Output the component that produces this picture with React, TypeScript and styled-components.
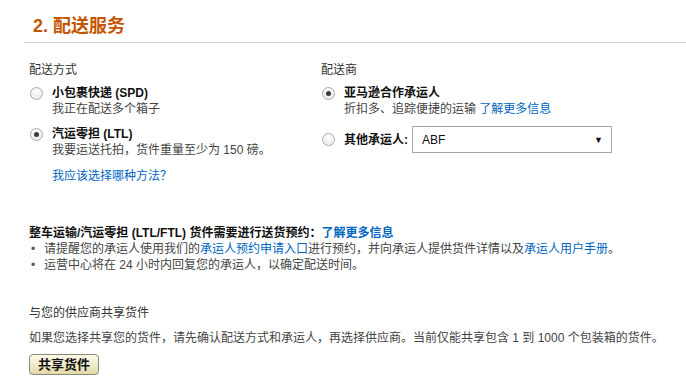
import React from "react";
import styled, { createGlobalStyle } from "styled-components";

const Global = createGlobalStyle`
  html, body { margin: 0; padding: 0; background: #fff; }
  body {
    font-family: "Liberation Sans", Arial, "Noto Sans CJK SC", sans-serif;
    font-size: 12px;
    line-height: 16px;
    color: #333;
  }
`;

const Page = styled.div`
  padding-left: 24px;
  width: 662px;
`;

const Header = styled.div`
  padding: 15px 0 5px 9px;
  border-bottom: 1px solid #cfcfcf;
`;

const Title = styled.h2`
  margin: 0;
  font-size: 18px;
  line-height: 22px;
  font-weight: 700;
  color: #c45500;
`;

const Content = styled.div`
  padding-left: 5px;
`;

const Columns = styled.div`
  display: grid;
  grid-template-columns: 292px 1fr;
  margin-top: 19px;
`;

const Column = styled.div`
  display: flex;
  flex-direction: column;
`;

const ColHeading = styled.div`
  color: #333;
  margin-bottom: 7px;
`;

const Option = styled.label<{ $gap?: number }>`
  display: flex;
  align-items: flex-start;
  margin-top: ${(p) => p.$gap ?? 0}px;
`;

const InlineOption = styled.label`
  display: flex;
  align-items: center;
  margin-top: 9px;
  height: 27px;
`;

const Radio = styled.span<{ $checked?: boolean; $inline?: boolean }>`
  flex: none;
  width: 11px;
  height: 11px;
  border-radius: 50%;
  border: 1px solid #a9a9a9;
  background: radial-gradient(circle at 50% 35%, #ffffff 0%, #eeeeee 55%, #d6d6d6 100%);
  margin: ${(p) => (p.$inline ? "0" : "2px")} 9px 0 1px;
  display: flex;
  align-items: center;
  justify-content: center;
  box-shadow: inset 0 0 0 1px rgba(255, 255, 255, 0.6);
  &::after {
    content: "";
    display: ${(p) => (p.$checked ? "block" : "none")};
    width: 5px;
    height: 5px;
    border-radius: 50%;
    background: #3c3c3c;
  }
`;

const OptionText = styled.div`
  display: flex;
  flex-direction: column;
`;

const OptionTitle = styled.span`
  font-weight: 700;
  color: #111;
`;

const OptionSub = styled.span`
  color: #444;
`;

const Link = styled.a<{ $bold?: boolean }>`
  color: #0066c0;
  text-decoration: none;
  font-weight: ${(p) => (p.$bold ? 700 : 400)};
`;

const HelpLink = styled(Link)`
  margin: 10px 0 0 23px;
`;

const Select = styled.div`
  box-sizing: border-box;
  margin-left: 4px;
  width: 200px;
  height: 27px;
  border: 1px solid #a6a6a6;
  display: flex;
  align-items: center;
  justify-content: space-between;
  padding: 0 8px 0 9px;
  color: #111;
  font-size: 12px;
`;

const Arrow = styled.span`
  font-size: 9px;
  color: #111;
`;

const Notice = styled.div`
  margin-top: 41px;
`;

const NoticeTitle = styled.div`
  font-weight: 700;
  color: #111;
`;

const List = styled.ul`
  list-style: none;
  margin: 0;
  padding: 0;
`;

const Item = styled.li`
  display: flex;
  color: #444;
  &::before {
    content: "•";
    color: #555;
    width: 15px;
    padding-left: 2px;
    box-sizing: border-box;
  }
`;

const Share = styled.div`
  margin-top: 32px;
  display: flex;
  flex-direction: column;
  align-items: flex-start;
`;

const ShareTitle = styled.div`
  color: #333;
`;

const Paragraph = styled.p`
  margin: 9px 0 0;
  color: #444;
`;

const Button = styled.button`
  margin-top: 8px;
  height: 21px;
  padding: 0 8px;
  border: 1px solid #8a8a7a;
  border-radius: 4px;
  background: linear-gradient(to bottom, #fbf8e8 0%, #f1ebcb 50%, #e2d9a8 100%);
  font-family: inherit;
  font-size: 13px;
  font-weight: 700;
  color: #111;
  line-height: 19px;
  box-shadow: 0 1px 1px rgba(0, 0, 0, 0.15);
`;

export default function App() {
  return (
    <Page>
      <Global />
      <Header>
        <Title>2. 配送服务</Title>
      </Header>
      <Content>
        <Columns>
          <Column>
            <ColHeading>配送方式</ColHeading>
            <Option>
              <Radio />
              <OptionText>
                <OptionTitle>小包裹快递 (SPD)</OptionTitle>
                <OptionSub>我正在配送多个箱子</OptionSub>
              </OptionText>
            </Option>
            <Option $gap={9}>
              <Radio $checked />
              <OptionText>
                <OptionTitle>汽运零担 (LTL)</OptionTitle>
                <OptionSub>我要运送托拍，货件重量至少为 150 磅。</OptionSub>
              </OptionText>
            </Option>
            <HelpLink href="#">我应该选择哪种方法？</HelpLink>
          </Column>
          <Column>
            <ColHeading>配送商</ColHeading>
            <Option>
              <Radio $checked />
              <OptionText>
                <OptionTitle>亚马逊合作承运人</OptionTitle>
                <OptionSub>
                  折扣多、追踪便捷的运输 <Link href="#">了解更多信息</Link>
                </OptionSub>
              </OptionText>
            </Option>
            <InlineOption>
              <Radio $inline />
              <OptionTitle>其他承运人:</OptionTitle>
              <Select>
                <span>ABF</span>
                <Arrow>▼</Arrow>
              </Select>
            </InlineOption>
          </Column>
        </Columns>
        <Notice>
          <NoticeTitle>
            整车运输/汽运零担 (LTL/FTL) 货件需要进行送货预约：<Link $bold href="#">了解更多信息</Link>
          </NoticeTitle>
          <List>
            <Item>
              <span>
                请提醒您的承运人使用我们的<Link href="#">承运人预约申请入口</Link>进行预约，并向承运人提供货件详情以及<Link href="#">承运人用户手册</Link>。
              </span>
            </Item>
            <Item>
              <span>运营中心将在 24 小时内回复您的承运人，以确定配送时间。</span>
            </Item>
          </List>
        </Notice>
        <Share>
          <ShareTitle>与您的供应商共享货件</ShareTitle>
          <Paragraph>
            如果您选择共享您的货件，请先确认配送方式和承运人，再选择供应商。当前仅能共享包含 1 到 1000 个包装箱的货件。
          </Paragraph>
          <Button>共享货件</Button>
        </Share>
      </Content>
    </Page>
  );
}
